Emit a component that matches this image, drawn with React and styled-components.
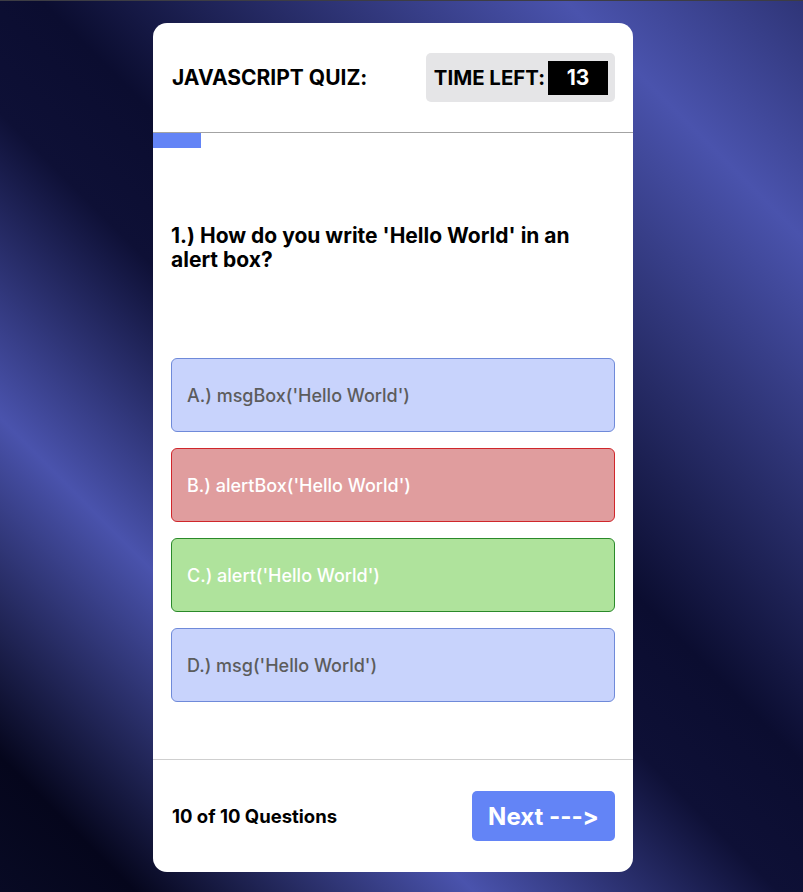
import React from 'react'
import styled, { createGlobalStyle } from 'styled-components'

const GlobalStyle = createGlobalStyle`
  html, body {
    margin: 0;
    padding: 0;
  }
  body {
    font-family: Inter, "Noto Sans", Arial, sans-serif;
    font-feature-settings: "calt" 0;
  }
  * {
    box-sizing: border-box;
  }
`

const colors = {
  card: '#ffffff',
  accent: '#6384f6',
  optionBg: '#c8d3fc',
  optionBorder: '#6f8ad9',
  wrongBg: '#e09d9e',
  wrongBorder: '#d0262b',
  rightBg: '#afe39c',
  rightBorder: '#2a8a2a',
}

const Page = styled.div`
  min-height: 100vh;
  display: flex;
  justify-content: center;
  align-items: flex-start;
  padding: 23px 17px 20px 0;
  border-top: 1px solid #3d3d44;
  background: linear-gradient(
    45deg,
    #080a24 0%,
    #05061c 8%,
    #4a53ad 28%,
    #0e1036 46%,
    #0b0d30 55%,
    #4a53ad 86%,
    #2f3578 100%
  );
`

const Card = styled.div`
  width: 480px;
  height: 849px;
  margin-top: -1px;
  background: ${colors.card};
  border-radius: 14px;
  display: flex;
  flex-direction: column;
  overflow: hidden;
`

const Header = styled.header`
  height: 110px;
  display: flex;
  align-items: center;
  justify-content: space-between;
  padding: 0 18px 0 19px;
  border-bottom: 1px solid #a3a3a3;
`

const Title = styled.h1`
  margin: 0;
  font-size: 21px;
  font-weight: 700;
  color: #000;
`

const Timer = styled.div`
  display: flex;
  align-items: center;
  height: 49px;
  padding: 0 7px 0 8px;
  background: #e5e5e7;
  border-radius: 5px;
  font-size: 20.4px;
  font-weight: 700;
  color: #000;
`

const Seconds = styled.span`
  display: flex;
  align-items: center;
  justify-content: center;
  width: 60px;
  height: 34px;
  margin-left: 3px;
  background: #000;
  color: #fff;
  font-size: 21px;
`

const Progress = styled.div`
  height: 15px;
`

const ProgressFill = styled.div`
  height: 100%;
  background: ${colors.accent};
`

const Body = styled.section`
  flex: 1;
  padding: 76px 18px 0;
  border-bottom: 1px solid #cfcfcf;
`

const Question = styled.h2`
  margin: 0 0 86px;
  font-size: 21px;
  line-height: 24px;
  font-weight: 700;
  color: #000;
`

const Options = styled.div`
  display: flex;
  flex-direction: column;
  gap: 16px;
`

const optionStyles = {
  idle: { bg: colors.optionBg, border: colors.optionBorder, text: '#5c5c5c' },
  wrong: { bg: colors.wrongBg, border: colors.wrongBorder, text: '#ffffff' },
  right: { bg: colors.rightBg, border: colors.rightBorder, text: '#ffffff' },
}

const Option = styled.button`
  display: flex;
  align-items: center;
  height: 74px;
  padding: 0 15px;
  border-radius: 6px;
  border: 1px solid ${p => optionStyles[p.$state].border};
  background: ${p => optionStyles[p.$state].bg};
  color: ${p => optionStyles[p.$state].text};
  font-family: inherit;
  font-feature-settings: inherit;
  font-size: 18px;
  font-weight: 500;
  text-align: left;
  cursor: pointer;
`

const Footer = styled.footer`
  height: 112px;
  display: flex;
  align-items: center;
  justify-content: space-between;
  padding: 0 18px 0 19px;
`

const Count = styled.span`
  font-size: 18.5px;
  font-weight: 700;
  color: #000;
`

const NextButton = styled.button`
  width: 143px;
  height: 50px;
  border: none;
  border-radius: 5px;
  background: ${colors.accent};
  color: #fff;
  font-family: inherit;
  font-feature-settings: inherit;
  font-size: 24px;
  font-weight: 700;
  cursor: pointer;
`

const answers = [
  { label: "A.) msgBox('Hello World')", state: 'idle' },
  { label: "B.) alertBox('Hello World')", state: 'wrong' },
  { label: "C.) alert('Hello World')", state: 'right' },
  { label: "D.) msg('Hello World')", state: 'idle' },
]

export default function App() {
  const progress = 10
  return (
    <Page>
      <GlobalStyle />
      <Card>
        <Header>
          <Title>JAVASCRIPT QUIZ:</Title>
          <Timer>
            TIME LEFT:
            <Seconds>13</Seconds>
          </Timer>
        </Header>
        <Progress>
          <ProgressFill style={{ width: `${progress}%` }} />
        </Progress>
        <Body>
          <Question>1.) How do you write 'Hello World' in an alert box?</Question>
          <Options>
            {answers.map(a => (
              <Option key={a.label} $state={a.state}>{a.label}</Option>
            ))}
          </Options>
        </Body>
        <Footer>
          <Count>10 of 10 Questions</Count>
          <NextButton>Next ---&gt;</NextButton>
        </Footer>
      </Card>
    </Page>
  )
}
